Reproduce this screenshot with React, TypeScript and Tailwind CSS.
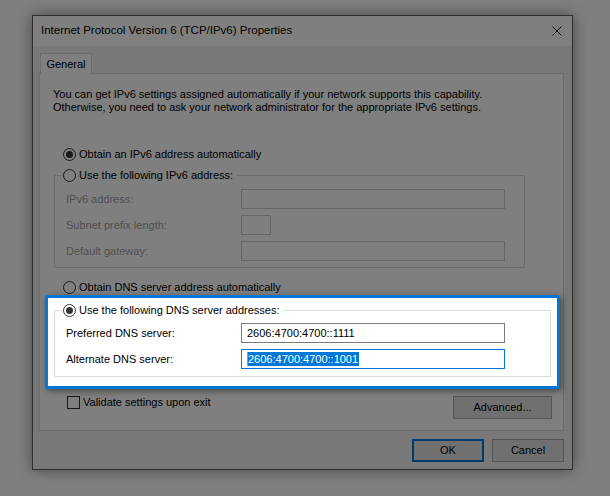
import { ReactNode } from 'react'

function Radio({ checked }: { checked?: boolean }) {
  return (
    <span className="flex h-[13px] w-[13px] shrink-0 items-center justify-center rounded-full border border-[#333333] bg-white">
      {checked && <span className="h-[7px] w-[7px] rounded-full bg-[#333333]" />}
    </span>
  )
}

function RadioLabel({ checked, children }: { checked?: boolean; children: ReactNode }) {
  return (
    <span className="flex h-[14px] items-center gap-[3px] leading-[14px]">
      <Radio checked={checked} />
      <span>{children}</span>
    </span>
  )
}

type FieldProps = {
  label: string
  disabled?: boolean
  narrow?: boolean
  focused?: boolean
  children?: ReactNode
}

function Field({ label, disabled, narrow, focused, children }: FieldProps) {
  const box = disabled
    ? 'border-[#cccccc]'
    : focused
      ? 'border-[#0078d7]'
      : 'border-[#7a7a7a]'
  return (
    <div className="flex h-[20px] items-center">
      <span className={`w-[175px] ${disabled ? 'text-[#a0a0a0]' : 'text-black'}`}>{label}</span>
      <div
        className={`flex h-[20px] items-center border bg-white pl-[5px] ${box} ${narrow ? 'w-[30px]' : 'w-[264px]'}`}
      >
        {children}
      </div>
    </div>
  )
}

function Button({ children, primary, w }: { children: ReactNode; primary?: boolean; w: string }) {
  return (
    <button
      className={`flex items-center justify-center bg-[#e1e1e1] ${w} ${
        primary ? 'h-[23px] border-2 border-[#0078d7]' : 'h-[23px] border border-[#adadad]'
      }`}
    >
      {children}
    </button>
  )
}

export default function App() {
  return (
    <div className="relative h-[496px] w-[610px] overflow-hidden bg-white pl-[32px] pt-[15px] font-['Liberation_Sans',Arial,sans-serif] text-[11px] text-black">
      {/* Dialog window */}
      <div className="flex h-[455px] w-[541px] flex-col border border-[#5a5a5a] bg-[#f0f0f0] shadow-[0_0_14px_rgba(0,0,0,0.45)]">
        {/* Title bar */}
        <div className="flex h-[30px] shrink-0 items-center justify-between bg-white pl-[8px] pr-[10px]">
          <span className="text-[11.5px]">Internet Protocol Version 6 (TCP/IPv6) Properties</span>
          <svg width="10" height="10" viewBox="0 0 10 10" className="text-black">
            <path d="M0.5 0.5 L9.5 9.5 M9.5 0.5 L0.5 9.5" stroke="currentColor" strokeWidth="1" />
          </svg>
        </div>

        <div className="flex flex-col pl-[6px]">
          {/* Tab strip */}
          <div className="mt-[7px] flex">
            <div className="relative -mb-px ml-px flex h-[21px] w-[52px] items-center justify-center border border-b-0 border-[#d9d9d9] bg-white">
              General
            </div>
          </div>

          {/* Tab page */}
          <div className="flex h-[358px] w-[525px] flex-col border border-[#d9d9d9] bg-white">
            <p className="mt-[14px] pl-[13px] leading-[13px]">
              You can get IPv6 settings assigned automatically if your network supports this capability.
              <br />
              Otherwise, you need to ask your network administrator for the appropriate IPv6 settings.
            </p>

            <div className="ml-[23px] mt-[33px]">
              <RadioLabel checked>Obtain an IPv6 address automatically</RadioLabel>
            </div>

            <fieldset className="ml-[14px] mt-[7px] w-[471px] border border-[#dcdcdc] pb-[6px]">
              <legend className="ml-[8px] pr-[3px]">
                <RadioLabel>Use the following IPv6 address:</RadioLabel>
              </legend>
              <div className="mt-[7px] flex flex-col gap-[6px] pl-[11px]">
                <Field label="IPv6 address:" disabled />
                <Field label="Subnet prefix length:" disabled narrow />
                <Field label="Default gateway:" disabled />
              </div>
            </fieldset>

            <div className="ml-[23px] mt-[12px]">
              <RadioLabel>Obtain DNS server address automatically</RadioLabel>
            </div>

            {/* Highlighted DNS section */}
            <div className="relative z-20 ml-[5px] mt-px h-[94px] w-[515px] rounded-[3px] border-[3px] border-[#0078d7] bg-white pt-[5px] shadow-[2px_2px_6px_rgba(0,0,0,0.45)]">
              <fieldset className="ml-[6px] w-[497px] border border-[#dcdcdc] pb-[7px]">
                <legend className="ml-[8px] pr-[3px]">
                  <RadioLabel checked>Use the following DNS server addresses:</RadioLabel>
                </legend>
                <div className="mt-[6px] flex flex-col gap-[6px] pl-[11px]">
                  <Field label="Preferred DNS server:">
                    <span>2606:4700:4700::1111</span>
                  </Field>
                  <Field label="Alternate DNS server:" focused>
                    <span className="flex h-[14px] items-center border-l border-[#ff7a1a] bg-[#0078d7] pr-px leading-[14px] text-white">
                      2606:4700:4700::1001
                    </span>
                  </Field>
                </div>
              </fieldset>
            </div>

            <div className="mt-[7px] flex items-start justify-between pl-[27px] pr-[11px]">
              <span className="flex h-[13px] items-center gap-[3px]">
                <span className="h-[13px] w-[13px] border border-[#333333] bg-white" />
                <span>Validate settings upon exit</span>
              </span>
              <Button w="w-[99px]">Advanced...</Button>
            </div>
          </div>
        </div>

        {/* Footer buttons */}
        <div className="mt-[8px] flex justify-end gap-[8px] pr-[8px]">
          <Button primary w="w-[72px]">
            OK
          </Button>
          <Button w="w-[72px]">Cancel</Button>
        </div>
      </div>

      {/* Dim overlay */}
      <div className="pointer-events-none absolute inset-0 z-10 bg-black/50" />
    </div>
  )
}
